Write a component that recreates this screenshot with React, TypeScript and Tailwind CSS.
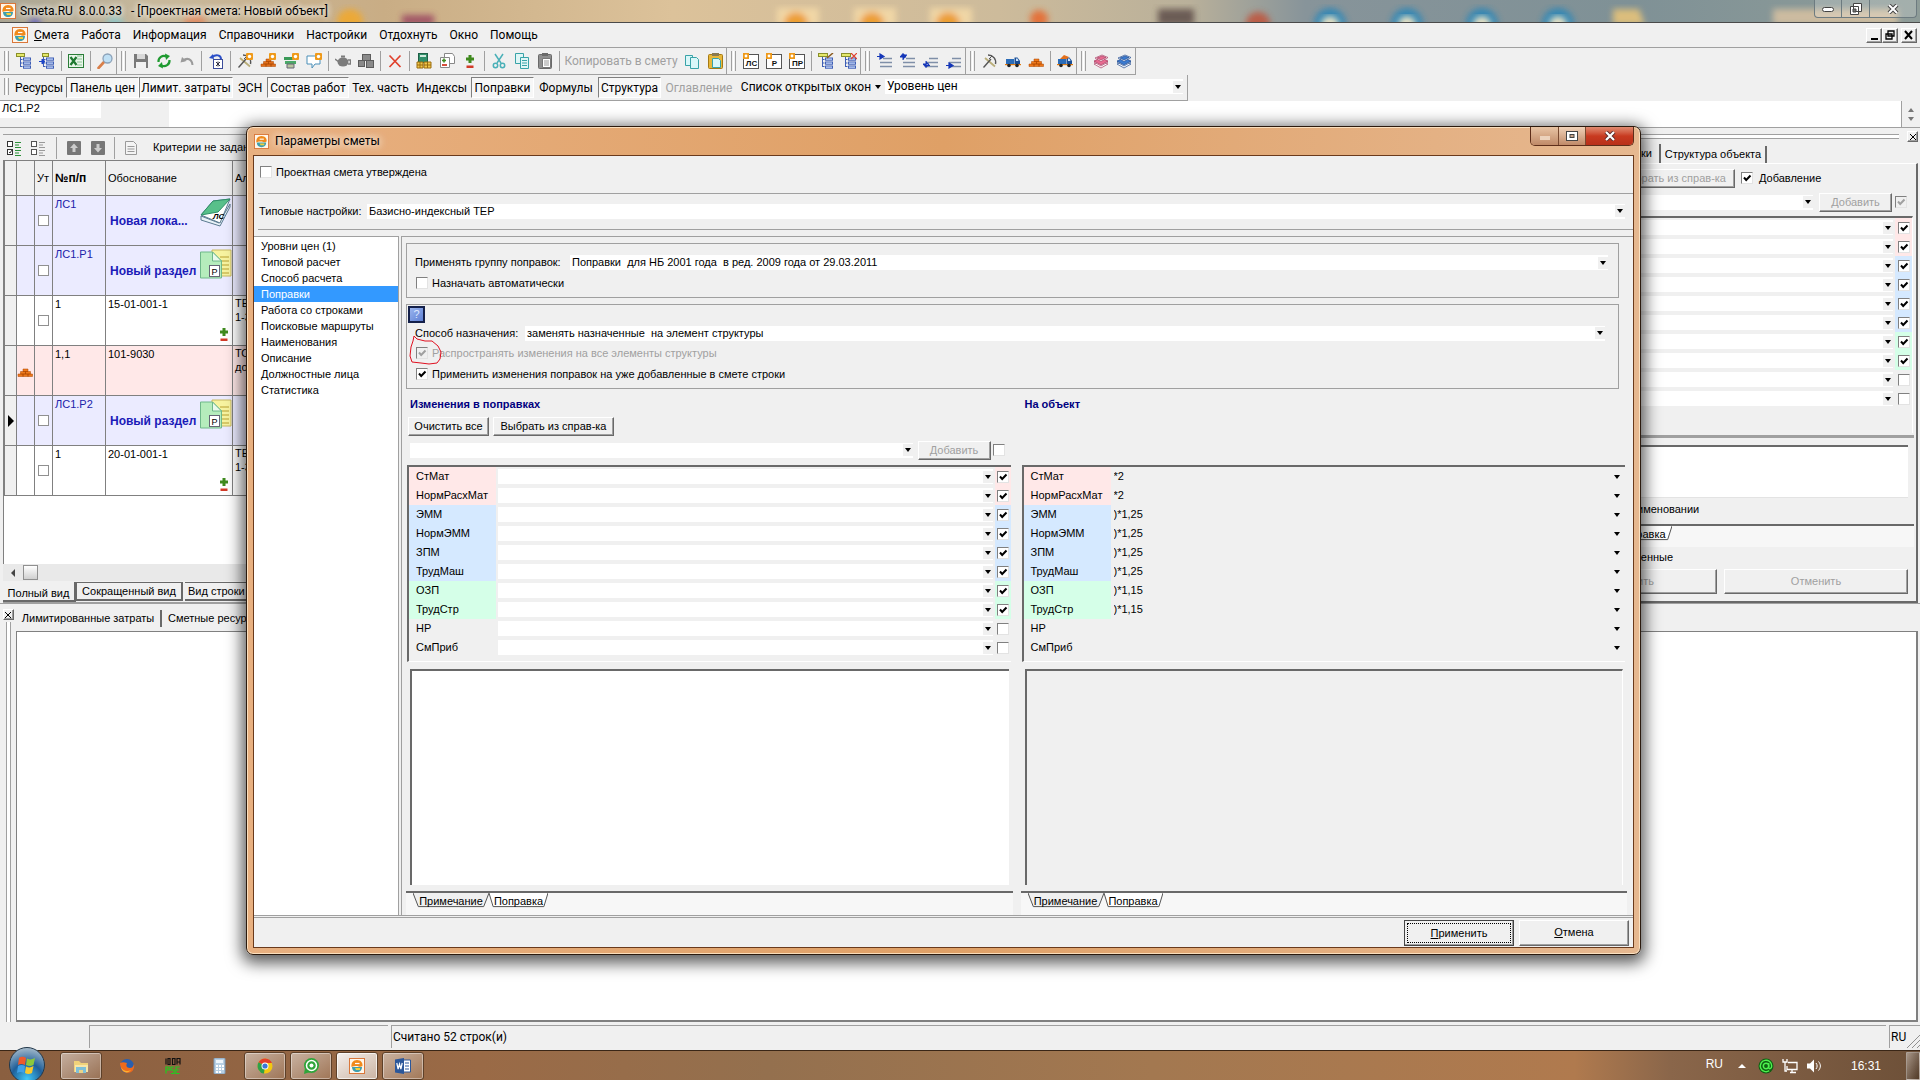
import { Fragment } from 'react';
import type { ReactNode } from 'react';

type Tone = 'pink' | 'blue' | 'green' | 'plain';

const tones: Record<Tone, string> = {
  pink: 'bg-[#ffe8e8]',
  blue: 'bg-[#d5e9ff]',
  green: 'bg-[#d5ffe8]',
  plain: 'bg-[#f0f0f0]',
};

const factors: { name: string; tone: Tone; on: boolean; value: string }[] = [
  { name: 'СтМат', tone: 'pink', on: true, value: '*2' },
  { name: 'НормРасхМат', tone: 'pink', on: true, value: '*2' },
  { name: 'ЭММ', tone: 'blue', on: true, value: ')*1,25' },
  { name: 'НормЭММ', tone: 'blue', on: true, value: ')*1,25' },
  { name: 'ЗПМ', tone: 'blue', on: true, value: ')*1,25' },
  { name: 'ТрудМаш', tone: 'blue', on: true, value: ')*1,25' },
  { name: 'ОЗП', tone: 'green', on: true, value: ')*1,15' },
  { name: 'ТрудСтр', tone: 'green', on: true, value: ')*1,15' },
  { name: 'НР', tone: 'plain', on: false, value: '' },
  { name: 'СмПриб', tone: 'plain', on: false, value: '' },
];

const menu = ['Работа', 'Информация', 'Справочники', 'Настройки', 'Отдохнуть', 'Окно', 'Помощь'];

const sections = [
  'Уровни цен (1)',
  'Типовой расчет',
  'Способ расчета',
  'Поправки',
  'Работа со строками',
  'Поисковые маршруты',
  'Наименования',
  'Описание',
  'Должностные лица',
  'Статистика',
];

const panels = [
  { label: 'Ресурсы', cls: 'w-[54px]' },
  { label: 'Панель цен', cls: 'w-[73px]', on: true },
  { label: 'Лимит. затраты', cls: 'w-[94px]', on: true },
  { label: 'ЭСН', cls: 'w-[34px]' },
  { label: 'Состав работ', cls: 'w-[82px]', on: true },
  { label: 'Тех. часть', cls: 'w-[63px]' },
  { label: 'Индексы', cls: 'w-[59px]' },
  { label: 'Поправки', cls: 'w-[63px]', on: true },
  { label: 'Формулы', cls: 'w-[64px]' },
  { label: 'Структура', cls: 'w-[63px]', on: true },
  { label: 'Оглавление', cls: 'w-[76px]', off: true },
];

const rows = [
  { kind: 'book', no: 'ЛС1', title: 'Новая лока...', note: '' },
  { kind: 'part', no: 'ЛС1.Р1', title: 'Новый раздел', note: '' },
  { kind: 'work', no: '1', title: '15-01-001-1', note: 'ТЕР 1-3' },
  { kind: 'res', no: '1,1', title: '101-9030', note: 'ТО до' },
  { kind: 'part', no: 'ЛС1.Р2', title: 'Новый раздел', note: '', current: true },
  { kind: 'work', no: '1', title: '20-01-001-1', note: 'ТЕР 1-3' },
];

const bevel = 'border border-t-white border-l-white border-r-[#696969] border-b-[#696969] shadow-[inset_-1px_-1px_0_#a0a0a0]';

/* ---------- icons ---------- */

const treeLines = (
  <g fill="#cfe0ff" stroke="#3f5fb5">
    <path d="M4.5 3v11M4.500 6.500h2M4.500 10h2M4.500 13.500h2" fill="none" />
    <rect x="7.500" y="5" width="7" height="2.200" />
    <rect x="7.500" y="9" width="7" height="2.200" />
    <rect x="7.500" y="13" width="7" height="2.200" />
  </g>
);
const gear = (
  <g>
    <rect x="9" y="0" width="7" height="7" rx="1" fill="#ef9a1a" />
    <circle cx="12.500" cy="3.500" r="1.700" fill="#fff" />
  </g>
);
const bricks = (color: string) => (
  <g fill={color} stroke="#a84400" strokeWidth="0.5">
    <path d="M6 6h5v2.500H6zM3.500 8.500h5V11h-5zM8.500 8.500h5V11h-5zM1 11h5v2.500H1zM6 11h5v2.500H6zM11 11h4.500v2.500H11z" />
  </g>
);
const truck = (
  <g>
    <path d="M1 6h8v5H1z" fill="#2b6cb8" />
    <path d="M9.500 4.500h3L15 8v3.500H9.500z" fill="#1a4f96" />
    <path d="M11 5.500h1.500L13.500 8H11z" fill="#cfe6ff" />
    <path d="M0 11h16v1.200H0z" fill="#e07a10" />
    <circle cx="4" cy="12.500" r="1.800" fill="#222" />
    <circle cx="12" cy="12.500" r="1.800" fill="#222" />
  </g>
);
const pick = (
  <g fill="none">
    <path d="M3 5l10 8.500" stroke="#b9ae7a" strokeWidth="1.800" />
    <path d="M1.500 14.500L9 6" stroke="#555" strokeWidth="1.400" />
    <path d="M6 2c5 0 8.500 4 7.500 9" stroke="#555" strokeWidth="1.400" />
    <path d="M7 6l3-3 2 2" stroke="#555" />
  </g>
);
const indent = (
  <path d="M6 5.500h9M3 9.500h12M3 13.500h12" stroke="#7f8fa8" strokeWidth="1.300" fill="none" />
);
const stack = (c: string, d: string) => (
  <g stroke={d} strokeWidth="0.700">
    <path d="M1 11l7-3 7 3-7 4z" fill="#fff" />
    <path d="M1 9l7-3 7 3-7 4z" fill="#fff" />
    <path d="M1 8l7-3 7 3-7 4z" fill={c} />
    <path d="M2 5l7-3 6 2.500-7 4z" fill="#fff" />
    <path d="M4 5l5-2 4 1.500-5 2.500z" fill={c} />
  </g>
);
const boxed = (text: string) => (
  <g>
    <rect x="0.500" y="1.500" width="15" height="14" fill="#fff" stroke="#555" />
    <rect x="0" y="0" width="6" height="6" fill="#ef9a1a" />
    <circle cx="3" cy="3" r="1.400" fill="#fff" />
    <text x="8.500" y="13" fontSize="8" fontWeight="bold" textAnchor="middle" fontFamily="Liberation Sans" fill="#111">{text}</text>
  </g>
);
const plusMinus = (
  <g>
    <path d="M6.500 2h3v2.500H12v3H9.500V10h-3V7.500H4v-3h2.500z" fill="#3f8a1e" />
    <path d="M4.500 12.500h7V15h-7z" fill="#d23a28" />
  </g>
);

const glyphs: Record<string, ReactNode> = {
  tree: <>{treeLines}<rect x="0.500" y="0.500" width="8" height="3" fill="#e4e86a" stroke="#8a8f2a" /></>,
  treeIn: <>{treeLines}<rect x="3.500" y="0.500" width="6" height="3" fill="#e4e86a" stroke="#8a8f2a" /><path d="M0 8.500h5M3 6l3 2.500L3 11z" fill="#1d44c8" stroke="#1d44c8" /></>,
  excel: <><rect x="0.500" y="1.500" width="15" height="13" fill="#e9f6ea" stroke="#2b7d38" /><path d="M9 3h5M9 6h5M9 9h5M9 12h5" stroke="#8cc494" /><path d="M2.500 4l6 8M8.500 4l-6 8" stroke="#1f7a30" strokeWidth="2.200" /></>,
  search: <><path d="M1.500 15L7 9" stroke="#d97f4a" strokeWidth="2.600" strokeLinecap="round" /><circle cx="10.500" cy="5.500" r="4.500" fill="#bfe0f5" stroke="#8ba1b8" strokeWidth="1.300" /></>,
  save: <><path d="M1 1h12l2 2v12H1z" fill="#7a7a7a" /><path d="M4 1h8v5H4z" fill="#d8d8d8" /><path d="M3 9h10v6H3z" fill="#f2f2f2" /></>,
  refresh: <g fill="none" stroke="#1f9a30" strokeWidth="2.200"><path d="M2.500 9a5.500 5.500 0 0 1 8-5.500M13.500 7a5.500 5.500 0 0 1-8 5.500" /><path d="M9 .5l5 2.500-4 4z M7 15.500L2 13l4-4z" fill="#1f9a30" stroke="none" /></g>,
  undo: <><path d="M4 8c4-4 9-2 9.500 4" fill="none" stroke="#9a9a9a" strokeWidth="2" /><path d="M1.500 9.500L3 4l4.500 4z" fill="#9a9a9a" /></>,
  undoDoc: <><rect x="5.500" y="6.500" width="9" height="9" fill="#fff" stroke="#3b4c9a" /><path d="M8 9l4 4M12 9l-4 4M10 8.500v5" stroke="#334" /><path d="M4 4c4-3 9-2 9 2" fill="none" stroke="#2b4fc8" strokeWidth="2" /><path d="M1 5l4-4 1 5z" fill="#2b4fc8" /></>,
  pickNew: <>{pick}{gear}</>,
  bricksNew: <>{bricks('#e2701c')}{gear}</>,
  equipNew: <><path d="M1 4h9v3H1z" fill="#3a9a58" /><path d="M2 8h11v3H2z" fill="#4aa868" /><path d="M4 11h7v4H4z" fill="#b8c4a0" stroke="#667" />{gear}</>,
  noteNew: <><path d="M1 3h13v8H9l-3 4v-4H1z" fill="#fff" stroke="#4a8fb8" />{gear}</>,
  teapot: <g fill="#7c7c7c"><ellipse cx="8" cy="9" rx="5.500" ry="4.500" /><path d="M0 6l4 3M13 7h2.500v4H13" stroke="#7c7c7c" strokeWidth="1.500" fill="none" /><rect x="6" y="2.500" width="4" height="2" /></g>,
  blocks: <g fill="#8a8a8a" stroke="#5c5c5c"><rect x="4.500" y="1.500" width="8" height="6" /><rect x="0.500" y="7.500" width="6" height="6" /><rect x="8.500" y="7.500" width="7" height="7" /></g>,
  del: <path d="M2.500 2.500l11 11.500M13.500 2.500l-11 11.500" stroke="#e0402c" strokeWidth="1.700" />,
  calc: <><rect x="2.500" y="0.500" width="9" height="9" fill="#2f8f6a" stroke="#1f5f46" /><path d="M4 2h6v2H4z" fill="#cfeadd" /><path d="M1 9h6v6H1zM8 9h7v6H8z" fill="#f2c84a" stroke="#9a6d10" /><path d="M1 12h6M8 12h7M4 9v6M11.500 9v6" stroke="#9a6d10" /></>,
  docEdit: <><path d="M5.500.5h8l2 3v7h-10z" fill="#fff" stroke="#888" /><path d="M1.500 4.500h9v10h-9z" fill="#fff" stroke="#888" /><path d="M3 7.500h4M5 5.500v4" stroke="#3f8a1e" strokeWidth="1.600" /><path d="M3 12h5" stroke="#d23a28" strokeWidth="1.800" /></>,
  plusMinus,
  cut: <g fill="none" stroke="#4ab0b8" strokeWidth="1.500"><path d="M4 1l6 9M12 1L6 10" /><circle cx="4.500" cy="12.500" r="2.200" /><circle cx="11.500" cy="12.500" r="2.200" /></g>,
  copy: <g fill="#dff6f6" stroke="#38a3a8"><path d="M1.500.5h8v10h-8z" /><path d="M6.500 4.500h8v11h-8z" /><path d="M8 7.500h5M8 10h5M8 12.500h5" /></g>,
  paste: <><rect x="1.500" y="1.500" width="13" height="14" rx="1" fill="#8f8f8f" stroke="#6a6a6a" /><path d="M5 0h6v3H5z" fill="#6a6a6a" /><path d="M5.500 5.500h8v9h-8z" fill="#fff" stroke="#777" /><path d="M7 8h5M7 10h5M7 12h5" stroke="#999" /></>,
  copyTo: <g fill="#d9f7f9" stroke="#38a3a8"><path d="M1.500 2.500h7v10h-7z" /><path d="M6.500 4.500h6l2 2v9h-8z" /></g>,
  pasteTo: <><rect x="1.500" y="1.500" width="14" height="14" rx="1" fill="#e8b83a" stroke="#a67a14" /><path d="M5 0h7v3H5z" fill="#8a7a50" /><path d="M5.500 5.500h6l2 2v7h-8z" fill="#d9f7f9" stroke="#38a3a8" /></>,
  ls: boxed('ЛС'),
  r: boxed('Р'),
  pr: boxed('ПР'),
  treeEdit: <>{treeLines}<rect x="0.500" y="0.500" width="9" height="3" fill="#e4e86a" stroke="#8a8f2a" /><path d="M9 5l6-5" stroke="#8a5a20" strokeWidth="1.500" /></>,
  treeDel: <>{treeLines}<rect x="0.500" y="0.500" width="9" height="3" fill="#e4e86a" stroke="#8a8f2a" /><path d="M10 0l6 6M16 0l-6 6" stroke="#e0402c" strokeWidth="1.200" /></>,
  in1: <>{indent}<path d="M0 3.500h4M3 1l4 2.500L3 6z" fill="#1436b8" stroke="#1436b8" strokeWidth="1.200" /></>,
  in2: <>{indent}<path d="M3 7V2h4M0 4l3-3.500L6 4z" fill="#1436b8" stroke="#1436b8" /></>,
  in3: <>{indent}<path d="M7 12.500H3V8M0 11l3 3.500L6 11z" fill="#1436b8" stroke="#1436b8" /></>,
  in4: <>{indent}<path d="M0 12.500h4M3 10l4 2.500L3 15z" fill="#1436b8" stroke="#1436b8" strokeWidth="1.200" /></>,
  pick,
  truck,
  bricks: bricks('#ef7a1c'),
  truckLoad: <>{truck}<path d="M3 6l4-4 5 2-2 2z" fill="#e2701c" /></>,
  pinkStack: stack('#e86a90', '#a83a60'),
  blueStack: stack('#3a7ad0', '#1f4a90'),
  checks: <g stroke="#333" fill="#fff"><rect x="0.500" y="1.500" width="5" height="5" /><rect x="0.500" y="9.500" width="5" height="5" /><path d="M2 12l1 1 2-3" /><path d="M8 2.500h6M8 5h4M8 7.500h6M8 10.500h6M8 13h4M8 15.500h6" stroke="#2b8f38" /></g>,
  boxes: <g stroke="#555" fill="#fff"><rect x="0.500" y="1.500" width="5" height="5" /><rect x="0.500" y="9.500" width="5" height="5" /><path d="M8 2.500h6M8 5h4M8 7.500h6M8 10.500h6M8 13h4M8 15.500h6" stroke="#999" /></g>,
  up: <><rect x="1" y="1" width="14" height="14" rx="1" fill="#777" /><path d="M8 3.500l4 4.500H9.500v4h-3V8H4z" fill="#ccc" /></>,
  down: <><rect x="1" y="1" width="14" height="14" rx="1" fill="#777" /><path d="M8 12.500L4 8h2.500V4h3v4H12z" fill="#ccc" /></>,
  page: <g fill="#f4f4f4" stroke="#9a9a9a"><path d="M2.500 1.500h8l3 3v10h-11z" /><path d="M4.500 6.500h7M4.500 9h7M4.500 11.500h7" /></g>,
};

function Icon({ name, className = 'size-4' }: { name: string; className?: string }) {
  return (
    <svg viewBox="0 0 16 16" className={className} aria-hidden="true">
      {glyphs[name]}
    </svg>
  );
}

function Logo({ className = 'size-4' }: { className?: string }) {
  return (
    <svg viewBox="0 0 16 16" className={className} aria-hidden="true">
      <rect x="0.500" y="0.500" width="15" height="15" fill="#fff6ea" stroke="#d9773a" />
      <path d="M3 9h10c0 3-2 5-5 5s-5-2-5-5z" fill="#3f9fae" />
      <path d="M6 10h5v2H7z" fill="#f4d03a" />
      <path d="M2.500 9C2 5 4 2 8 2s6 3 5.500 6c-2 1.500-4 .5-5 0C6 8 4 8 2.500 9z" fill="#f08a1c" />
      <path d="M6 5.500h4.500" stroke="#fff" strokeWidth="1.200" />
    </svg>
  );
}

function Arrow() {
  return (
    <svg viewBox="0 0 6 4" className="pointer-events-none h-1 w-1.5 shrink-0" aria-hidden="true">
      <path d="M0 0h6L3 4z" />
    </svg>
  );
}

/* ---------- controls ---------- */

function Check({ on = false, off = false, label, id }: { on?: boolean; off?: boolean; label?: string; id?: string }) {
  return (
    <span className="relative inline-flex size-3 shrink-0">
      <input
        type="checkbox"
        id={id}
        aria-label={label}
        defaultChecked={on}
        disabled={off}
        className="peer size-3 appearance-none border border-t-[#808080] border-r-[#e3e3e3] border-b-[#e3e3e3] border-l-[#808080] bg-white disabled:bg-[#f0f0f0]"
      />
      <svg viewBox="0 0 12 12" className="pointer-events-none absolute inset-0 hidden text-black peer-checked:block peer-disabled:text-[#a0a0a0]">
        <path d="M3 5.500l2.200 2.500L9.500 3.500" fill="none" stroke="currentColor" strokeWidth="2" />
      </svg>
    </span>
  );
}

function Combo({ value = '', label, className = '', flat = false, id }: { value?: string; label?: string; className?: string; flat?: boolean; id?: string }) {
  return (
    <div className={`flex h-[15px] min-w-0 flex-1 items-center ${flat ? '' : 'bg-white'} ${className}`}>
      <select id={id} aria-label={label} className="h-[15px] min-w-0 flex-1 appearance-none bg-transparent pl-[2px] leading-[15px] outline-none">
        <option>{value}</option>
      </select>
      <span className="flex h-3 w-[10px] items-center justify-center bg-[#f0f0f0]"><Arrow /></span>
    </div>
  );
}

function PushButton({ children, className = '', off = false }: { children: ReactNode; className?: string; off?: boolean }) {
  return (
    <button type="button" disabled={off} className={`bg-[#f0f0f0] ${bevel} disabled:text-[#a0a0a0] ${className}`}>
      {children}
    </button>
  );
}

function PanelClose() {
  return (
    <PushButton className="flex size-[11px] items-center justify-center">
      <svg viewBox="0 0 6 6" className="size-[6px] shrink-0"><path d="M0 0l6 6M6 0L0 6" stroke="#000" /></svg>
    </PushButton>
  );
}

function Factors({ target = false }: { target?: boolean }) {
  return (
    <div className="mr-[2px] ml-px border-t-2 border-l-2 border-t-[#696969] border-l-[#696969] border-b border-b-white pb-[4px]">
      {factors.map((f) => (
        <div key={f.name} className="flex h-[19px] items-center">
          <span className={`flex h-[19px] w-[87px] items-center pl-[7px] ${tones[f.tone]}`}>{f.name}</span>
          <Combo label={f.name} value={target ? f.value : ''} flat={target} className={target ? 'pl-px' : 'ml-[2px]'} />
          {target ? (
            <span className="w-[3px]" />
          ) : (
            <span className={`ml-[2px] flex h-[19px] w-[16px] items-center justify-center ${tones[f.tone]}`}>
              <Check on={f.on} label={`${f.name} применять`} />
            </span>
          )}
        </div>
      ))}
    </div>
  );
}

function SlantTab({ children, active = false, className }: { children: string; active?: boolean; className: string }) {
  return (
    <button type="button" className={`relative h-[15px] leading-[12px] ${className}`}>
      <svg viewBox="0 0 100 16" preserveAspectRatio="none" className="absolute inset-0 size-full" aria-hidden="true">
        <path d="M0 0L7 14.500H93L100 0" fill={active ? '#f0f0f0' : '#fff'} stroke="#555" vectorEffect="non-scaling-stroke" />
      </svg>
      <span className="relative">{children}</span>
    </button>
  );
}

function NoteTabs() {
  return (
    <div className="mt-[6px] flex h-[24px] border-t-2 border-[#696969] bg-[#f7f7f7] pl-[7px]">
      <SlantTab active className="w-[76px]">Примечание</SlantTab>
      <SlantTab className="w-[59px]">Поправка</SlantTab>
    </div>
  );
}

function Grip() {
  return (
    <span className="flex w-[12px] shrink-0 justify-center gap-px py-[3px]">
      <span className="w-px bg-[#a0a0a0]" />
      <span className="w-px bg-white" />
      <span className="w-px bg-[#a0a0a0]" />
    </span>
  );
}

function ToolGroup({ items, note }: { items: string[]; note?: string }) {
  return (
    <div className="flex border-r border-[#a0a0a0]">
      <Grip />
      {items.map((name, i) => (
        <Fragment key={i}>
          {name === '|' && <span className="my-[3px] mr-[2px] ml-[3px] w-px bg-[#a0a0a0]" />}
          {name === 'text' && <button type="button" disabled className="w-[118px] whitespace-nowrap text-[#a0a0a0]">{note}</button>}
          {name !== '|' && name !== 'text' && (
            <button type="button" aria-label={name} className="flex w-[23px] items-center justify-center">
              <Icon name={name} />
            </button>
          )}
        </Fragment>
      ))}
    </div>
  );
}

/* ---------- main window ---------- */

function Wallpaper() {
  return (
    <svg viewBox="0 0 1920 23" preserveAspectRatio="xMidYMin slice" className="absolute inset-0 size-full" aria-hidden="true">
      <defs>
        <linearGradient id="sky">
          <stop offset="0" stopColor="#aaa593" />
          <stop offset="0.08" stopColor="#c8b99c" />
          <stop offset="0.2" stopColor="#c9ad85" />
          <stop offset="0.35" stopColor="#dcc29a" />
          <stop offset="0.52" stopColor="#cdbb9b" />
          <stop offset="0.62" stopColor="#b9b09a" />
          <stop offset="0.68" stopColor="#87949a" />
          <stop offset="0.85" stopColor="#7f9196" />
          <stop offset="1" stopColor="#8e9c98" />
        </linearGradient>
        <filter id="soft"><feGaussianBlur stdDeviation="3" /></filter>
      </defs>
      <path d="M0 0h1920v23H0z" fill="url(#sky)" />
      <g filter="url(#soft)" opacity="0.85">
        <circle cx="35" cy="24" r="6" fill="#5b5bc8" />
        <circle cx="115" cy="24" r="9" fill="#8fc6c8" />
        <circle cx="195" cy="24" r="11" fill="#e08a60" />
        <circle cx="350" cy="22" r="13" fill="#f2a82a" />
        <path d="M402 15h32v10h-32z" fill="#9a4560" />
        <path d="M777 8h42v18h-42zM854 8h42v18h-42zM930 8h42v18h-42z" fill="#f6dba8" />
        <circle cx="796" cy="24" r="12" fill="#f29a22" />
        <circle cx="872" cy="24" r="12" fill="#f29a22" />
        <circle cx="948" cy="24" r="12" fill="#f29a22" />
        <circle cx="1039" cy="19" r="9" fill="#e8662a" />
        <path d="M1158 9h36v16h-36z" fill="#5d4d4a" />
        <circle cx="1258" cy="24" r="12" fill="#c0523a" />
        <circle cx="1330" cy="24" r="16" fill="#2a86b8" />
        <circle cx="1407" cy="24" r="16" fill="#2a86b8" />
        <circle cx="1482" cy="24" r="16" fill="#2a86b8" />
        <circle cx="1558" cy="24" r="16" fill="#2a86b8" />
        <path d="M1613 9h26l6 16h-32z" fill="#ecc678" />
        <path d="M1773 9h125v16h-125z" fill="#d9c2a2" />
      </g>
      <g filter="url(#soft)" fill="#e8e2c4">
        <circle cx="1330" cy="25" r="9" />
        <circle cx="1407" cy="25" r="9" />
        <circle cx="1482" cy="25" r="9" />
        <circle cx="1558" cy="25" r="9" />
      </g>
    </svg>
  );
}

function TitleBar() {
  return (
    <header className="relative flex h-[23px] items-start justify-between border-b border-[#4a4a4a]">
      <Wallpaper />
      <div className="relative flex items-center gap-1 pt-[2px] text-black">
        <Logo />
        <h1 className="whitespace-pre leading-[18px] [text-shadow:0_0_6px_#fff,0_0_6px_#fff]">Smeta.RU  8.0.0.33   - [Проектная смета: Новый объект]</h1>
      </div>
      <div className="relative mr-[3px] flex h-[18px] rounded-b border border-t-0 border-[#6d7b80] bg-white/20">
        <button type="button" aria-label="Свернуть" className="flex w-[27px] items-end justify-center border-r border-[#6d7b80] pb-[5px]">
          <span className="h-[5px] w-3 rounded-sm border border-[#444] bg-white" />
        </button>
        <button type="button" aria-label="Восстановить" className="flex w-[28px] items-center justify-center border-r border-[#6d7b80]">
          <svg viewBox="0 0 12 12" className="size-3"><path d="M3.500.5h8v8h-8zM.5 3.500h8v8h-8z" fill="#fff" stroke="#444" /><path d="M3 6h3v3H3z" fill="#777" stroke="#444" /></svg>
        </button>
        <button type="button" aria-label="Закрыть" className="flex w-[46px] items-center justify-center">
          <svg viewBox="0 0 12 10" className="h-[10px] w-3"><path d="M2 1l8 8M10 1L2 9" stroke="#444" strokeWidth="4" /><path d="M2 1l8 8M10 1L2 9" stroke="#fff" strokeWidth="2" /></svg>
        </button>
      </div>
    </header>
  );
}

function MenuBar() {
  return (
    <nav className="flex h-[25px] items-center border-b border-[#a0a0a0]">
      <Grip />
      <Logo />
      <div className="ml-[6px] flex flex-1 gap-[12px]">
        <button type="button"><u>С</u>мета</button>
        {menu.map((m) => <button type="button" key={m}>{m}</button>)}
      </div>
      <div className="mr-[3px] flex">
        <PushButton className="flex h-[15px] w-[16px] items-end justify-center pb-[2px]"><span className="h-[2px] w-[7px] bg-black" /></PushButton>
        <PushButton className="mr-[3px] flex h-[15px] w-[16px] items-center justify-center">
          <svg viewBox="0 0 10 10" className="size-[10px]"><path d="M3 1h6v5H3zM1 4h6v5H1z" fill="#f0f0f0" stroke="#000" strokeWidth="1.300" /></svg>
        </PushButton>
        <PushButton className="flex h-[15px] w-[16px] items-center justify-center">
          <svg viewBox="0 0 10 10" className="size-[10px]"><path d="M1 1l7 8M8 1L1 9" stroke="#000" strokeWidth="2" /></svg>
        </PushButton>
      </div>
    </nav>
  );
}

function Toolbars() {
  return (
    <>
      <div className="flex h-[27px]">
        <div className="flex border-b border-[#a0a0a0]">
          <ToolGroup items={['tree', 'treeIn', '|', 'excel', '|', 'search']} />
          <ToolGroup
            note="Копировать в смету"
            items={['save', 'refresh', 'undo', '|', 'undoDoc', '|', 'pickNew', 'bricksNew', 'equipNew', 'noteNew', '|', 'teapot', 'blocks', '|', 'del', '|', 'calc', 'docEdit', 'plusMinus', '|', 'cut', 'copy', 'paste', '|', 'text', 'copyTo', 'pasteTo']}
          />
          <ToolGroup items={['ls', 'r', 'pr', '|', 'treeEdit', 'treeDel']} />
          <ToolGroup items={['in1', 'in2', 'in3', 'in4']} />
          <ToolGroup items={['pick', 'truck', 'bricks', '|', 'truckLoad']} />
          <ToolGroup items={['pinkStack', 'blueStack']} />
        </div>
      </div>
      <div className="flex h-[26px]">
        <div className="flex w-[1188px] border-r border-b border-[#a0a0a0] pb-[2px]">
          <Grip />
          {panels.map((p) => (
            <button
              type="button"
              key={p.label}
              disabled={p.off}
              className={`mt-[2px] ${p.cls} shrink-0 whitespace-nowrap disabled:text-[#a0a0a0] ${p.on ? 'border border-t-[#808080] border-r-white border-b-white border-l-[#808080] bg-[#f7f7f7] pt-px' : ''}`}
            >
              {p.label}
            </button>
          ))}
          <button type="button" className="flex w-[148px] shrink-0 items-center justify-center gap-1 whitespace-nowrap">
            Список открытых окон <Arrow />
          </button>
          <div className="my-1 flex flex-1 items-center pr-1">
            <Combo label="Уровень цен" value="Уровень цен" />
          </div>
        </div>
      </div>
    </>
  );
}

function RowIcon({ kind }: { kind: string }) {
  if (kind === 'book') {
    return (
      <svg viewBox="0 0 32 30" className="mt-[2px] h-[30px] w-8 shrink-0" aria-hidden="true">
        <path d="M1 18L19 25 30 6V9L20 28 1 22z" fill="#e8f2f8" stroke="#5a7a90" />
        <path d="M1 17L13 3 30 1 20 25z" fill="#fff" stroke="#5a7a90" />
        <path d="M1 17L13 3 30 1 18 14z" fill="#58c08a" stroke="#2f8f68" />
        <text x="13" y="21" fontSize="8" fontWeight="bold" fontStyle="italic" fontFamily="Liberation Sans">ЛС</text>
      </svg>
    );
  }
  if (kind === 'part') {
    return (
      <svg viewBox="0 0 32 30" className="mt-[3px] h-[30px] w-8 shrink-0" aria-hidden="true">
        <path d="M12 1h19v26H12z" fill="#f7f3a0" stroke="#c8b860" />
        <path d="M20 8h9M20 12h9M20 16h9M20 20h9M20 24h9" stroke="#b8a030" />
        <path d="M.5 3h12l9 9v17H.5z" fill="#b5ecbc" stroke="#6fb88a" />
        <path d="M12.500 3v9h9z" fill="#eaf9ec" stroke="#6fb88a" />
        <rect x="9.500" y="16.500" width="10" height="11" fill="#fff" stroke="#667" />
        <text x="14.500" y="25.500" fontSize="9" textAnchor="middle" fontFamily="Liberation Sans">Р</text>
      </svg>
    );
  }
  return kind === 'work' ? <Icon name="plusMinus" className="mb-[2px] size-4 self-end" /> : null;
}

function EstimateGrid() {
  return (
    <section className="flex min-w-0 flex-1 flex-col pl-[3px]">
      <div className="mt-[6px] flex h-[26px] items-center border-t border-[#a0a0a0] pl-1">
        <Icon name="checks" />
        <Icon name="boxes" className="ml-2 size-4" />
        <span className="mx-[9px] h-[22px] w-px bg-[#a0a0a0]" />
        <Icon name="up" />
        <Icon name="down" className="ml-2 size-4" />
        <span className="mx-[8px] h-[22px] w-px bg-[#a0a0a0]" />
        <Icon name="page" />
        <span className="ml-[14px]">Критерии не заданы</span>
      </div>
      <div className="flex-1 border-l border-[#808080] bg-white">
        <table className="w-full table-fixed border-collapse">
          <colgroup>
            <col className="w-[12px]" />
            <col className="w-[18px]" />
            <col className="w-[18px]" />
            <col className="w-[53px]" />
            <col className="w-[127px]" />
            <col />
          </colgroup>
          <thead>
            <tr className="h-[35px] bg-[#f0f0f0] text-left [&>th]:border [&>th]:border-[#808080] [&>th]:font-normal">
              <th />
              <th />
              <th className="pl-[2px]">Ут</th>
              <th className="pl-[2px] text-[12px]"><b>№п/п</b></th>
              <th className="pl-[2px]">Обоснование</th>
              <th className="pl-[2px]">Альтернатива</th>
            </tr>
          </thead>
          <tbody>
            {rows.map((r, i) => {
              const head = r.kind === 'book' || r.kind === 'part';
              const fill = head ? 'bg-[#ebebff]' : r.kind === 'res' ? 'bg-[#ffe8e8]' : 'bg-white';
              return (
                <tr key={i} className={`h-[50px] align-top ${fill} [&>td]:border [&>td]:border-[#808080] [&>td]:p-0`}>
                  <td className="bg-[#f0f0f0] align-middle">
                    {r.current && <svg viewBox="0 0 6 12" className="ml-[3px] h-3 w-1.5"><path d="M0 0l6 6-6 6z" /></svg>}
                  </td>
                  <td className="align-middle">{r.kind === 'res' && <Icon name="bricks" className="size-4" />}</td>
                  <td className="align-middle">
                    {r.kind !== 'res' && <input type="checkbox" aria-label={`Утверждено ${r.no}`} className="mx-[3px] block size-[11px] appearance-none border border-[#909090] bg-white" />}
                  </td>
                  <td><span className={`pl-[2px] leading-4 ${head ? 'text-[#2222aa]' : ''}`}>{r.no}</span></td>
                  <td>
                    <div className="flex h-[48px] items-start justify-between pl-[2px]">
                      <span className={head ? 'self-center pt-px pl-[2px] text-[12px] font-bold whitespace-nowrap text-[#1a1ab8]' : 'leading-4'}>{r.title}</span>
                      <RowIcon kind={r.kind} />
                    </div>
                  </td>
                  <td><span className="block w-7 pl-[2px] leading-[14px]">{r.note}</span></td>
                </tr>
              );
            })}
          </tbody>
        </table>
      </div>
      <div className="flex h-[17px] items-center gap-2 bg-[#e9e9e9] pl-2">
        <svg viewBox="0 0 4 8" className="h-2 w-1"><path d="M4 0v8L0 4z" fill="#444" /></svg>
        <span className="h-[15px] w-[15px] border border-[#909090] bg-linear-to-b from-white to-[#d0d0d0]" />
      </div>
      <div className="flex h-[22px] items-start border-b border-[#a0a0a0] pt-px">
        <button type="button" className="h-[20px] w-[73px] border-r-2 border-b-2 border-[#696969] pt-[3px] whitespace-nowrap">Полный вид</button>
        <button type="button" className="h-[19px] w-[107px] border border-r-2 border-b-2 border-[#696969] whitespace-nowrap">Сокращенный вид</button>
        <button type="button" className="ml-[2px] h-[19px] w-[80px] border-t border-b-2 border-[#696969] pl-[3px] text-left">Вид строки</button>
      </div>
    </section>
  );
}

function SidePanel() {
  return (
    <aside className="flex w-[420px] flex-col pr-[2px]">
      <div className="flex h-[16px] items-end gap-2 pb-[2px]">
        <span className="mb-[3px] h-[5px] flex-1 border-y border-[#a0a0a0] bg-white" />
        <PanelClose />
      </div>
      <div className="flex h-[19px] items-end">
        <button type="button" className="h-[19px] w-[161px] border-r-2 border-[#696969] pr-[7px] text-right">Поправки</button>
        <button type="button" className="h-[17px] w-[106px] border-r-2 border-[#696969] whitespace-nowrap">Структура объекта</button>
      </div>
      <div className="flex flex-1 flex-col border-t border-r-2 border-b-2 border-t-white border-r-[#696969] border-b-[#696969] pt-1 pb-[7px]">
        <div className="flex h-[20px] items-center">
          <PushButton off className="ml-[111px] h-[19px] w-[124px] whitespace-nowrap">Выбрать из справ-ка</PushButton>
          <label className="ml-[6px] flex items-center gap-[6px]"><Check on />Добавление</label>
        </div>
        <div className="mt-1 flex h-[20px] items-center pr-[9px]">
          <Combo label="Поправка" className="mr-[6px]" />
          <PushButton off className="mr-[3px] h-[19px] w-[73px]">Добавить</PushButton>
          <Check on off label="Добавлять" />
        </div>
        <div className="mt-[4px] mr-[3px] border-t-2 border-r border-t-[#696969] border-r-white pb-[25px]">
          {factors.map((f) => (
            <div key={f.name} className="flex h-[19px] items-center">
              <Combo label={f.name} />
              <span className={`ml-[2px] flex h-[19px] w-[17px] items-center justify-center ${tones[f.tone]}`}><Check on={f.on} label={`${f.name} добавить`} /></span>
            </div>
          ))}
        </div>
        <div className="mt-[2px] mr-[2px] h-[3px] bg-[#a0a0a0]" />
        <textarea aria-label="Примечание" className="mt-[7px] mr-[8px] block h-[53px] resize-none border-t-2 border-t-[#696969] border-b border-b-[#e3e3e3] bg-white" />
        <p className="mt-[2px] flex h-[19px] items-center pl-[60px]">Указывать в наименовании</p>
        <div className="mt-[5px] mr-[2px] flex h-[23px] border-t-2 border-[#696969] bg-[#f7f7f7] pl-[110px]">
          <SlantTab className="w-[62px]">Поправка</SlantTab>
        </div>
        <p className="flex h-[20px] items-center pl-[84px] whitespace-nowrap">Все назначенные</p>
        <div className="mt-[2px] flex gap-[7px] pr-[8px]">
          <PushButton off className="h-[25px] flex-1 pl-[34px]">Применить</PushButton>
          <PushButton off className="h-[25px] w-[184px]">Отменить</PushButton>
        </div>
      </div>
    </aside>
  );
}

function BottomPanel() {
  return (
    <section className="flex flex-1 border-t border-[#a0a0a0]">
      <div className="flex w-[16px] flex-col items-center pt-[5px]">
        <PanelClose />
        <span className="mt-[2px] w-[5px] flex-1 border-x border-[#a0a0a0] bg-white" />
      </div>
      <div className="flex flex-1 flex-col">
        <div className="flex h-[27px] items-end pb-[4px]">
          <button type="button" className="h-[17px] w-[146px] border-r-2 border-[#696969] whitespace-nowrap">Лимитированные затраты</button>
          <button type="button" className="h-[17px] px-[6px] whitespace-nowrap">Сметные ресурсы</button>
        </div>
        <div className="mr-[2px] flex-1 border border-t-[#808080] border-r-2 border-b-2 border-[#808080] bg-white" />
      </div>
    </section>
  );
}

function StatusBar() {
  return (
    <footer className="flex h-[28px] items-stretch gap-[3px] pt-[3px] pb-[2px] pl-[89px] font-['Roboto',sans-serif] text-[12px]">
      <span className="w-[299px] border-t border-l border-[#a0a0a0]" />
      <span className="flex flex-1 items-center border-t border-l border-[#a0a0a0] pl-px">Считано 52 строк(и)</span>
      <span className="flex w-[31px] items-center border-t border-l border-[#a0a0a0] pl-px">RU
        <svg viewBox="0 0 14 14" className="ml-auto size-[14px] shrink-0 self-end"><path d="M1 14L14 1M6 14l8-8M11 14l3-3" stroke="#909090" /></svg>
      </span>
    </footer>
  );
}

const taskApps: { name: string; mode: string; art: ReactNode }[] = [
  { name: 'Проводник', mode: 'open', art: <><path d="M1 3h5l2 2h7v9H1z" fill="#f0d27a" /><path d="M2 7h13v7H2z" fill="#f8e6a8" /><path d="M3 9h10v6H3z" fill="#7fc0d8" /><path d="M6 12h4v3H6z" fill="#e9d48a" /></> },
  { name: 'Firefox', mode: 'pin', art: <><circle cx="8" cy="8" r="7" fill="#2a5fae" /><path d="M1 5c0 7 4 10 8 10 4 0 7-4 6-9-1 3-2 4-4 4-4 0-4-3-3-5-3-1-5-1-7 0z" fill="#ee6a1c" /><path d="M2 9c2 4 6 5 10 3-3 4-9 3-10-3z" fill="#f9b233" /></> },
  { name: 'PSE', mode: 'pin', art: <g fill="none" strokeWidth="1.200"><path d="M1 .5v6M3 .5h2v6H3zM7.500.5h2.500v6H7.500zM12 6.500v-6h3v6M12 4h3" stroke="#111" /><path d="M1 15.500V9h3v3H1M9 9H6v3h3v3.500H6M14.500 9H11v6.500h3.500M11 12h3" stroke="#1fce1f" /></g> },
  { name: 'Калькулятор', mode: 'pin', art: <><rect x="3" y="0" width="11" height="16" rx="1" fill="#b8d0e4" stroke="#7f9ab5" /><path d="M5 2h7v3H5z" fill="#eef6fc" /><path d="M5 7h2v2H5zM8 7h2v2H8zM11 7h2v2h-2zM5 10h2v2H5zM8 10h2v2H8zM11 10h2v2h-2zM5 13h2v2H5zM8 13h2v2H8z" fill="#fff" /></> },
  { name: 'Chrome', mode: 'open', art: <><circle cx="8" cy="8" r="7.500" fill="#f2c811" /><path d="M8 8L1.500 4.300A7.500 7.500 0 0 1 15 5H8z" fill="#e2402c" /><path d="M8 8l-1 7.500A7.500 7.500 0 0 1 1.500 4.300z" fill="#2fa04a" /><circle cx="8" cy="8" r="3.500" fill="#fff" /><circle cx="8" cy="8" r="2.600" fill="#3a78d8" /></> },
  { name: 'Агент', mode: 'open', art: <><circle cx="8.500" cy="7.500" r="7.500" fill="#2fa53a" /><path d="M1 16l1-6 5 4z" fill="#2fa53a" /><circle cx="8.500" cy="7.500" r="5" fill="none" stroke="#fff" strokeWidth="1.500" /><circle cx="8.500" cy="7.500" r="2" fill="#fff" /></> },
  { name: 'Smeta.RU', mode: 'active', art: null },
  { name: 'Word', mode: 'open', art: <><path d="M8 2h7.500v12H8z" fill="#fff" stroke="#2b579a" /><path d="M10 5h4M10 8h4M10 11h4" stroke="#2b579a" /><path d="M0 1.500L9 0v16l-9-1.500z" fill="#2b579a" /><path d="M1.800 5l1.300 6 1.400-5 1.400 5 1.300-6" stroke="#fff" fill="none" strokeWidth="1.200" /></> },
];

const taskModes: Record<string, string> = {
  pin: 'border-transparent',
  open: 'border-[#5d4029] bg-linear-to-br from-white/50 to-white/10 shadow-[inset_0_0_0_1px_rgba(255,255,255,0.4)]',
  active: 'border-[#5d4029] bg-linear-to-br from-white/90 to-white/50 shadow-[inset_0_0_0_1px_rgba(255,255,255,0.7)]',
};

function Taskbar() {
  return (
    <footer className="flex h-[30px] items-center border-t border-[#3a2616] bg-[linear-gradient(90deg,#8a5f40_0%,#9a6a46_25%,#94704e_40%,#a37850_60%,#b07a4e_82%,#8a664a_87%,#6d5038_100%)]">
      <button type="button" aria-label="Пуск" className="relative mr-[14px] ml-2 h-[29px] w-[38px]">
        <svg viewBox="0 0 38 38" className="absolute -top-[5px] left-0 size-[38px]" aria-hidden="true">
          <defs>
            <radialGradient id="orb" cx="0.500" cy="0.900" r="0.900">
              <stop offset="0" stopColor="#3fc8f8" />
              <stop offset="0.500" stopColor="#1f5f9a" />
              <stop offset="1" stopColor="#a8bccb" />
            </radialGradient>
          </defs>
          <circle cx="19" cy="19" r="17.500" fill="url(#orb)" stroke="#23384a" />
          <path d="M11 12c3-2 5-1 7 0l-1 7c-3-1.500-5-1-7 0z" fill="#ee5a2c" />
          <path d="M19 12.500c3 1.500 5 1 8-.5l-1.500 7c-3 1.500-5 1-7.500 0z" fill="#8cc83c" />
          <path d="M10 20c3-1.500 5-1 7 0l-1 7c-3-1.500-5-1-7 0z" fill="#3fa0e8" />
          <path d="M18 20.500c3 1.500 5 1 7.500-.5L24 27c-3 1.500-5 1-7 0z" fill="#f8c82c" />
        </svg>
      </button>
      {taskApps.map((a) => (
        <button type="button" key={a.name} aria-label={a.name} className={`mr-1 flex h-[28px] w-[42px] items-center justify-center rounded-[3px] border ${taskModes[a.mode]}`}>
          {a.art ? <svg viewBox="0 0 16 16" className="size-4">{a.art}</svg> : <Logo />}
        </button>
      ))}
      <div className="ml-auto flex items-center text-[12px] text-white">
        <span className="mr-[15px] pb-1">RU</span>
        <svg viewBox="0 0 8 4" className="mr-[12px] h-1 w-2"><path d="M0 4l4-4 4 4z" fill="#fff" /></svg>
        <svg viewBox="0 0 16 16" className="mr-[8px] size-4"><circle cx="8" cy="8" r="7.500" fill="#0f5f12" /><circle cx="8" cy="8" r="2.700" fill="none" stroke="#4ef04e" strokeWidth="1.500" /><path d="M10.700 5v4.500c0 2 3 1.500 3-1.500a5.700 5.700 0 1 0-2.500 4.700" fill="none" stroke="#4ef04e" strokeWidth="1.400" /></svg>
        <svg viewBox="0 0 16 16" className="mr-[8px] size-4" fill="none" stroke="#fff" strokeWidth="1.300"><path d="M6 4.500h9v7H5V8M8 14.500h6M10 11.500v3" /><path d="M1 1v3h4V1M3 4v9h2" /></svg>
        <svg viewBox="0 0 16 16" className="mr-[29px] size-4"><path d="M1 5.500h3L8 1.500v13l-4-4H1z" fill="#fff" /><path d="M10 5c1.500 2 1.500 4 0 6M12.500 3.500c2.500 3 2.500 6 0 9" fill="none" stroke="#fff" /></svg>
        <time className="mr-[25px]">16:31</time>
        <button type="button" aria-label="Показать рабочий стол" className="h-[28px] w-[14px] border border-white/40 bg-linear-to-br from-white/40 to-black/20" />
      </div>
    </footer>
  );
}

/* ---------- dialog ---------- */

function SettingsDialog() {
  return (
    <div
      role="dialog"
      aria-label="Параметры сметы"
      className="absolute top-[126px] right-[279px] bottom-[125px] left-[246px] flex flex-col rounded-[7px] border border-[#2b1a0e] bg-linear-to-r from-[#e8b080] via-[#dfa066] to-[#e6b890] px-[6px] pb-[6px] shadow-[inset_0_0_0_1px_rgba(255,235,205,0.8),0_4px_16px_4px_rgba(0,0,0,0.65)]"
    >
      <div className="flex h-[28px] items-start justify-between font-['Roboto',sans-serif] text-[12px]">
        <div className="flex items-center gap-[6px] pt-[6px] pl-px">
          <Logo className="size-[15px]" />
          <h2 className="leading-4 [text-shadow:0_0_8px_#fff,0_0_8px_#fff]">Параметры сметы</h2>
        </div>
        <div className="flex h-[19px] overflow-hidden rounded-b-[5px] border border-t-0 border-[#5e2e1a]">
          <button type="button" aria-label="Свернуть" className="flex w-[28px] items-end justify-center border-r border-[#7a4a30] bg-linear-to-b from-[#e8c4a4] to-[#c08a68] pb-[5px]">
            <span className="h-1 w-[10px] bg-[#ecd2bc]" />
          </button>
          <button type="button" aria-label="Развернуть" className="flex w-[27px] items-center justify-center border-r border-[#7a4a30] bg-linear-to-b from-[#f0d2b8] to-[#c08a68]">
            <svg viewBox="0 0 12 10" className="h-[10px] w-3"><rect x="0.500" y="0.500" width="11" height="9" fill="#fff" stroke="#444" /><rect x="4" y="3.500" width="4" height="3" fill="#c9a58a" stroke="#444" /></svg>
          </button>
          <button type="button" aria-label="Закрыть" className="flex w-[47px] items-center justify-center bg-linear-to-b from-[#e08a70] via-[#c83a20] to-[#b8301a]">
            <svg viewBox="0 0 12 10" className="h-[10px] w-3"><path d="M2 1l8 8M10 1L2 9" stroke="#5a2a2a" strokeWidth="4" /><path d="M2 1l8 8M10 1L2 9" stroke="#fff" strokeWidth="2.200" /></svg>
          </button>
        </div>
      </div>

      <div className="flex min-h-0 flex-1 flex-col border border-[#6a3a1c] bg-[#f0f0f0]">
        <div className="ml-1 flex h-[38px] items-center border-b border-[#a0a0a0] pb-[5px] pl-[2px]">
          <label className="flex items-center gap-[4px]"><Check />Проектная смета утверждена</label>
        </div>
        <div className="ml-1 flex h-[36px] items-center border-b border-[#a0a0a0] pr-[8px] pb-px pl-px">
          <label htmlFor="preset" className="w-[108px] whitespace-nowrap">Типовые настройки:</label>
          <Combo id="preset" value="Базисно-индексный ТЕР" />
        </div>

        <div className="mt-[6px] flex min-h-0 flex-1">
          <ul className="w-[145px] border-t border-r border-[#a0a0a0] bg-white pt-px">
            {sections.map((s) => (
              <li key={s}>
                <button type="button" className={`block h-[16px] w-full pl-[7px] text-left leading-4 ${s === 'Поправки' ? 'bg-[#3399ff] text-white' : ''}`}>{s}</button>
              </li>
            ))}
          </ul>

          <div className="ml-[2px] flex min-w-0 flex-1 flex-col border-t border-l border-[#a0a0a0] pt-[6px] pr-[6px] pl-1">
            <fieldset className="mr-[8px] h-[55px] border border-[#a0a0a0] pt-[10px] pr-[10px] pl-2">
              <div className="flex h-[17px] items-center">
                <label htmlFor="group" className="w-[155px] whitespace-nowrap">Применять группу поправок:</label>
                <Combo id="group" value={'Поправки\u00a0 для НБ 2001 года\u00a0 в ред. 2009 года от 29.03.2011'} />
              </div>
              <label className="mt-[4px] flex h-[16px] w-fit items-center gap-[4px] pl-px"><Check />Назначать автоматически</label>
            </fieldset>

            <fieldset className="mt-[6px] mr-[8px] h-[85px] border border-[#a0a0a0] pt-px pr-[13px] pl-2">
              <button type="button" aria-label="Справка" className="-ml-[7px] block size-[17px] border-2 border-[#14204a] bg-linear-to-br from-[#9ab4ee] to-[#5f80d4] text-[11px] leading-[13px] text-[#dfe8ff]">?</button>
              <div className="mt-px flex h-[18px] items-center">
                <label htmlFor="method" className="w-[110px] whitespace-nowrap">Способ назначения:</label>
                <Combo id="method" value={'заменять назначенные\u00a0 на элемент структуры'} />
              </div>
              <div className="relative mt-[3px] w-fit pl-px">
                <label className="flex h-[16px] items-center gap-[4px] text-[#a0a0a0]"><Check on off />Распространять изменения на все элементы структуры</label>
                <svg viewBox="0 0 34 32" className="pointer-events-none absolute -top-[10px] -left-[6px] h-8 w-[34px]" aria-hidden="true">
                  <path d="M4 6L5 1L8 4L16 6L23 6L29 11L32 17L31 24L28 28L20 29L12 28L3 27L1 21L2 12L4 6" fill="none" stroke="#e01020" strokeWidth="1" />
                </svg>
              </div>
              <label className="mt-[5px] flex h-[16px] w-fit items-center gap-[4px] pl-px"><Check on />Применить изменения поправок на уже добавленные в смете строки</label>
            </fieldset>

            <div className="grid min-h-0 flex-1 grid-cols-2 gap-2">
              <section className="flex flex-col">
                <h3 className="flex h-[28px] items-center pt-[3px] pl-1 font-bold text-[#000080]">Изменения в поправках</h3>
                <div className="flex gap-[4px] pl-[2px]">
                  <PushButton className="h-[19px] w-[81px]">Очистить все</PushButton>
                  <PushButton className="h-[19px] w-[121px]">Выбрать из справ-ка</PushButton>
                </div>
                <div className="mt-[5px] flex h-[18px] items-center pr-[8px] pl-[4px]">
                  <Combo label="Изменение" className="mr-[5px]" />
                  <PushButton off className="mr-[2px] h-[19px] w-[73px]">Добавить</PushButton>
                  <Check label="Добавить изменение" />
                </div>
                <div className="h-[6px]" />
                <Factors />
                <textarea aria-label="Примечание к изменениям" className="mx-[4px] mt-[7px] block min-h-0 flex-1 resize-none border-t-2 border-l-2 border-t-[#696969] border-l-[#696969] bg-white" />
                <NoteTabs />
              </section>
              <section className="flex flex-col">
                <h3 className="mb-[48px] flex h-[28px] items-center pt-[3px] pl-1 font-bold text-[#000080]">На объект</h3>
                <Factors target />
                <textarea aria-label="Примечание к объекту" readOnly className="mx-[4px] mt-[7px] block min-h-0 flex-1 resize-none border-t-2 border-l-2 border-t-[#696969] border-l-[#696969] border-r border-r-white bg-[#f0f0f0]" />
                <NoteTabs />
              </section>
            </div>
          </div>
        </div>

        <div className="flex h-[32px] items-center justify-end gap-[5px] border-t-[3px] border-double border-[#a0a0a0] pr-[4px]">
          <button type="button" className={`h-[26px] w-[110px] bg-[#f0f0f0] p-[2px] outline outline-[#444] -outline-offset-1 ${bevel}`}>
            <span className="block border border-dotted border-black leading-[18px]"><u>П</u>рименить</span>
          </button>
          <PushButton className="h-[26px] w-[110px]"><u>О</u>тмена</PushButton>
        </div>
      </div>
    </div>
  );
}

export default function App() {
  return (
    <div className="relative flex min-h-screen w-full flex-col overflow-hidden bg-[#f0f0f0] font-['Liberation_Sans',Arial,sans-serif] text-[11px] text-black">
      <div className="font-['Roboto',sans-serif] text-[12px]">
        <TitleBar />
        <MenuBar />
        <Toolbars />
      </div>
      <div className="flex h-[27px] border-b border-[#a0a0a0] bg-white">
        <div className="flex w-[169px] bg-[#f0f0f0]">
          <span className="h-[17px] w-[101px] bg-white pl-[2px] leading-[14px]">ЛС1.Р2</span>
        </div>
        <div className="ml-auto flex w-[19px] flex-col items-center justify-around border-l border-[#a0a0a0] bg-[#f0f0f0] py-1">
          <svg viewBox="0 0 6 4" className="h-1 w-1.5"><path d="M0 4l3-4 3 4z" fill="#777" /></svg>
          <svg viewBox="0 0 6 4" className="h-1 w-1.5"><path d="M0 0h6L3 4z" fill="#777" /></svg>
        </div>
      </div>
      <main className="flex flex-1 flex-col">
        <div className="flex">
          <EstimateGrid />
          <SidePanel />
        </div>
        <BottomPanel />
      </main>
      <StatusBar />
      <Taskbar />
      <SettingsDialog />
    </div>
  );
}
